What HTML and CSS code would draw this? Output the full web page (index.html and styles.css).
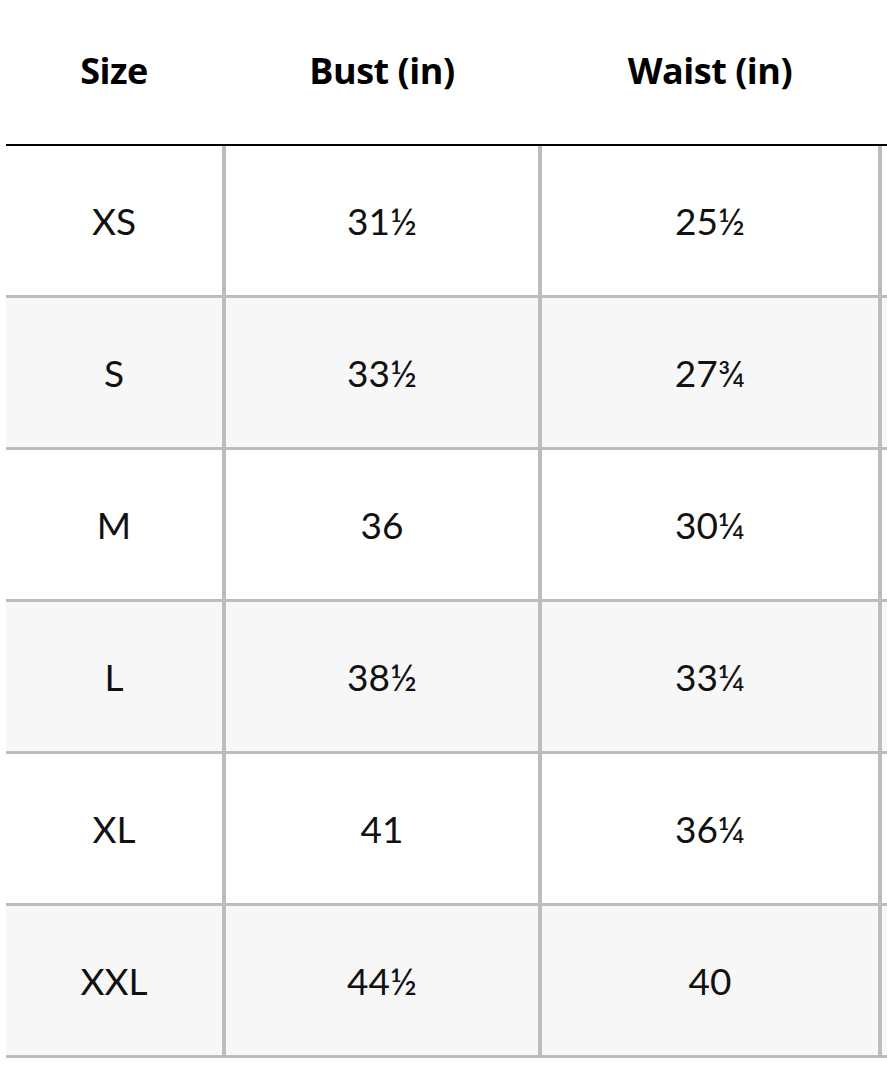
FILE: index.html
```html
<!DOCTYPE html>
<html lang="en">
<head>
<meta charset="utf-8">
<title>Size chart</title>
<link rel="stylesheet" href="styles.css">
</head>
<body>
<div class="chart">
  <div class="row head">
    <div class="cell">Size</div>
    <div class="cell">Bust (in)</div>
    <div class="cell">Waist (in)</div>
    <div class="cell"></div>
  </div>
  <div class="row">
    <div class="cell">XS</div><div class="cell">31½</div><div class="cell">25½</div><div class="cell"></div>
  </div>
  <div class="row alt">
    <div class="cell">S</div><div class="cell">33½</div><div class="cell">27¾</div><div class="cell"></div>
  </div>
  <div class="row">
    <div class="cell">M</div><div class="cell">36</div><div class="cell">30¼</div><div class="cell"></div>
  </div>
  <div class="row alt">
    <div class="cell">L</div><div class="cell">38½</div><div class="cell">33¼</div><div class="cell"></div>
  </div>
  <div class="row">
    <div class="cell">XL</div><div class="cell">41</div><div class="cell">36¼</div><div class="cell"></div>
  </div>
  <div class="row alt">
    <div class="cell">XXL</div><div class="cell">44½</div><div class="cell">40</div><div class="cell"></div>
  </div>
</div>
</body>
</html>
```
FILE: styles.css
```css
html, body {
  margin: 0;
  padding: 0;
  overflow: hidden;
  background: #ffffff;
}
body {
  padding-left: 6px;
  font-family: Lato, "Open Sans", sans-serif;
  color: #111111;
}
.chart {
  display: flex;
  flex-direction: column;
  width: 1216px;
}
.row {
  display: grid;
  grid-template-columns: 220px 316px 340px 340px;
  height: 152px;
  background: #ffffff;
}
.row.alt {
  background: #f7f7f7;
}
.cell {
  box-sizing: border-box;
  display: flex;
  align-items: center;
  justify-content: center;
  font-size: 37px;
  border-right: 4px solid #bcbcbe;
  border-bottom: 3px solid #bcbcbe;
}
.row.head {
  height: 146px;
  border-bottom: 2px solid #000000;
  box-sizing: border-box;
}
.row.head .cell {
  font-family: "Open Sans", sans-serif;
  font-weight: 700;
  font-size: 36px;
  color: #000000;
  border: none;
  padding-right: 4px;
  padding-bottom: 4px;
  letter-spacing: -0.5px;
}
```
